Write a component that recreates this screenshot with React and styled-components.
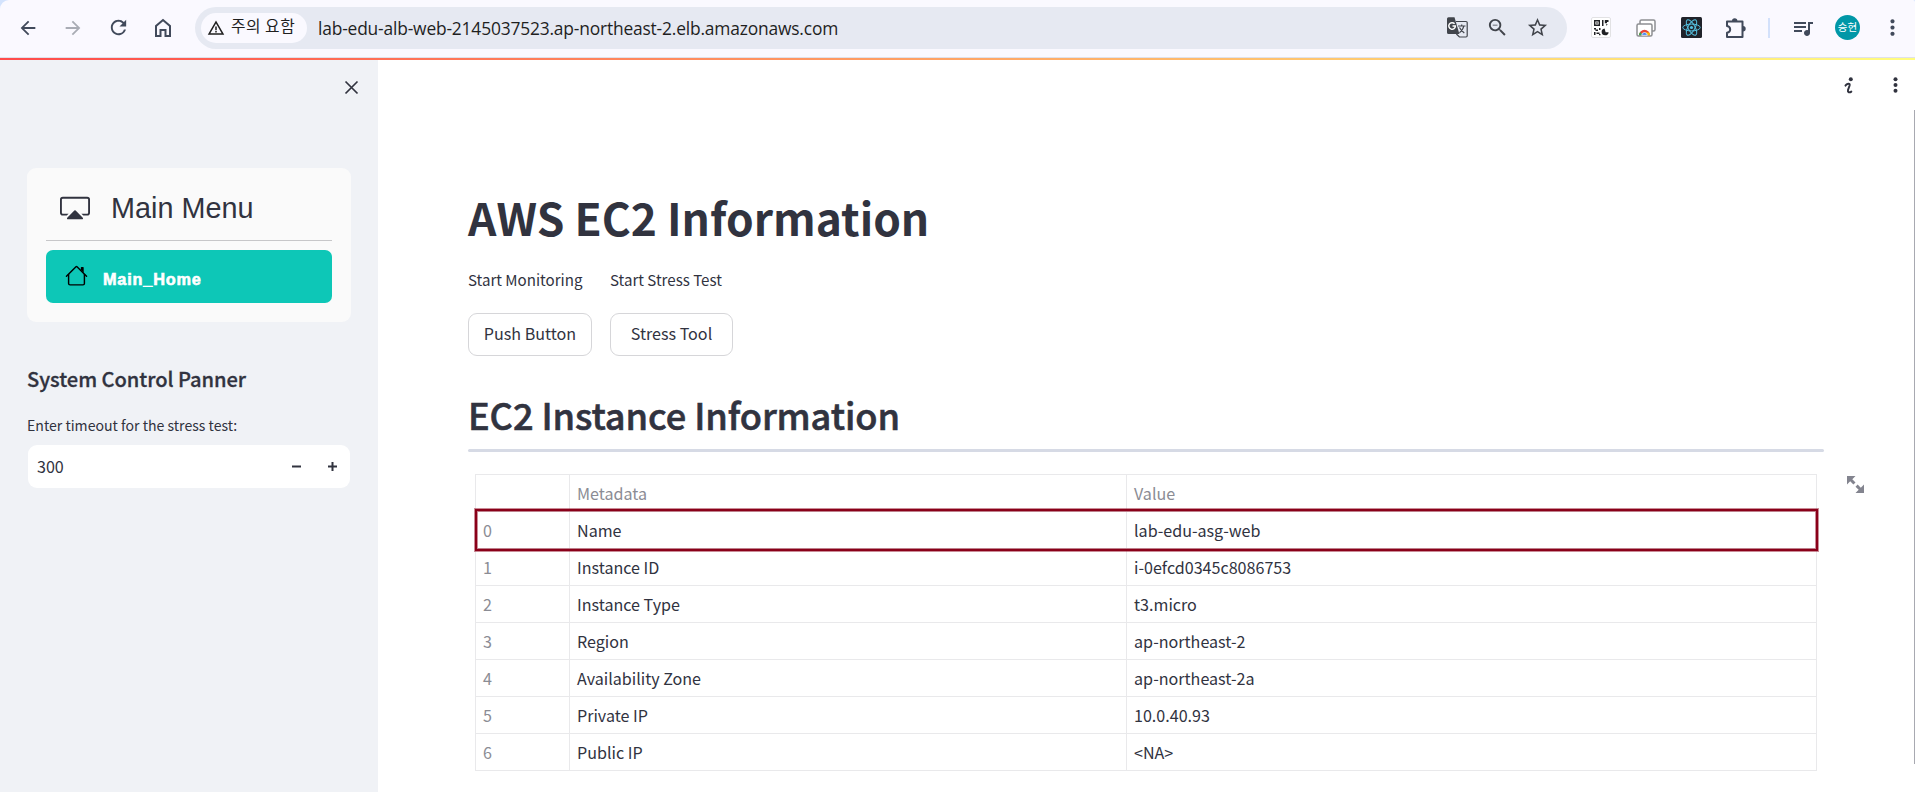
import React from "react";
import styled, { createGlobalStyle } from "styled-components";
import {
  MdArrowBack, MdArrowForward, MdRefresh, MdWarningAmber,
  MdZoomOut, MdStarBorder, MdQueueMusic, MdMoreVert,
} from "react-icons/md";

const sans = `"Noto Sans CJK KR", "Noto Sans", sans-serif`;

const GlobalStyle = createGlobalStyle`
  * { box-sizing: border-box; }
  body { margin: 0; background: #fff; overflow: hidden; font-family: ${sans}; color: #31333f; }
  svg { display: block; flex: none; }
`;

const Window = styled.div`
  height: 792px;
  display: flex;
  flex-direction: column;
  background: #fff;
`;

const TopStrip = styled.div`background: #d3e3fd;`;

const Toolbar = styled.header`
  height: 58px;
  display: flex;
  align-items: center;
  padding: 0 8px 2px 16px;
  background: #faf9ff;
  border-bottom: 1px solid #dfe1ea;
  border-radius: 9px 2px 0 0;
  color: #414a5b;
`;

const NavButton = styled.span`
  width: 24px;
  height: 24px;
  flex: none;
  margin-right: ${(p) => p.$gap ?? 21}px;
  display: grid;
  place-items: center;
  color: ${(p) => (p.$muted ? "#a9acb5" : "#414a5b")};
`;

const AddressBar = styled.div`
  width: 1372px;
  height: 42px;
  flex: none;
  padding: 0 18px 0 6px;
  display: flex;
  align-items: center;
  border-radius: 21px;
  background: #e6e9f2;
  color: #41444b;
`;

const SecurityChip = styled.div`
  width: 106px;
  height: 30px;
  padding-left: 6px;
  display: flex;
  align-items: center;
  gap: 6px;
  border-radius: 15px;
  background: #faf9ff;
  color: #1f1f1f;
  font-size: 15.8px;
  letter-spacing: 0.5px;
  line-height: 28px;
  white-space: nowrap;
`;

const ChipText = styled.span`padding-bottom: 3px;`;

const Url = styled.span`
  flex: 1;
  margin-left: 11px;
  padding-top: 1px;
  font: 17.4px/30px "Open Sans", sans-serif;
  letter-spacing: -0.18px;
  color: #1f1f1f;
`;

const AddressActions = styled.div`
  display: flex;
  align-items: center;
  gap: 17.5px;
`;

const Extensions = styled.div`
  flex: 1;
  margin-left: 22px;
  display: flex;
  align-items: center;
`;

const ExtensionSlot = styled.span`
  width: 24px;
  flex: none;
  margin-right: ${(p) => p.$gap ?? 21}px;
  display: grid;
  place-items: center;
`;

const ToolbarDivider = styled.i`
  width: 2px;
  height: 20px;
  flex: none;
  margin-right: 21px;
  background: #d3e1fb;
`;

const Avatar = styled.span`
  width: 25px;
  height: 25px;
  flex: none;
  margin-right: 20px;
  border-radius: 50%;
  background: #0097a7;
  color: #fff;
  font-size: 10.5px;
  line-height: 24px;
  text-align: center;
  white-space: nowrap;
`;

const Decoration = styled.div`
  height: 2px;
  flex: none;
  background: linear-gradient(90deg, #ff4b4b, #fffd80);
`;

const Page = styled.div`
  flex: 1;
  display: flex;
  min-height: 0;
`;

const Sidebar = styled.aside`
  width: 378px;
  padding: 0 27px;
  background: #f0f2f6;
`;

const CloseRow = styled.div`
  height: 108px;
  margin-right: -8px;
  padding-top: 20px;
  display: flex;
  justify-content: flex-end;
`;

const MenuCard = styled.nav`
  height: 154px;
  padding: 0 19px;
  border-radius: 9px;
  background: #fafafa;
`;

const MenuTitle = styled.div`
  height: 73px;
  padding: 7px 0 0 14px;
  display: flex;
  align-items: center;
  gap: 21px;
  border-bottom: 1px solid #c7c7c9;
  font: 28.8px/36px "Liberation Sans", sans-serif;
`;

const MenuItem = styled.div`
  height: 53px;
  margin-top: 9px;
  padding: 0 0 0 19px;
  display: flex;
  align-items: center;
  gap: 15px;
  border-radius: 7px;
  background: #0dc7b7;
  color: #fff;
  font: 900 16.3px/24px "Liberation Sans", sans-serif;
  letter-spacing: 0.8px;
  -webkit-text-stroke: 0.6px #fff;

  svg { margin-bottom: 2px; }
`;

const MenuItemText = styled.span`padding-top: 5px;`;

const SidebarHeading = styled.h3`
  margin: 43px 0 0;
  font-size: 20.1px;
  font-weight: 500;
  line-height: 28px;
  letter-spacing: -0.04px;
  -webkit-text-stroke: 0.3px #31333f;
`;

const FieldLabel = styled.label`
  display: block;
  margin: 20px 0 8px;
  font-size: 14.1px;
  line-height: 24px;
`;

const NumberField = styled.div`
  height: 43px;
  margin: 0 1px;
  padding: 0 13px 1px 9px;
  display: flex;
  align-items: center;
  border-radius: 9px;
  background: #fff;
  font-size: 16.1px;
`;

const FieldValue = styled.span`flex: 1;`;

const Stepper = styled.span`
  display: flex;
  gap: 27px;
`;

const Main = styled.main`
  flex: 1;
  display: flex;
  flex-direction: column;
  padding-left: 90px;
`;

const PageActions = styled.div`
  height: 50px;
  display: flex;
  align-items: center;
  justify-content: flex-end;
  gap: 39px;
  padding: 0 17px 0 0;
`;

const ScrollArea = styled.div`
  height: 654px;
  padding-right: 90px;
  border-right: 1px solid #a8a9b1;
`;

const Title = styled.h1`
  margin: 0;
  padding-top: 77px;
  font-size: 44.3px;
  font-weight: 700;
  line-height: 60px;
`;

const Controls = styled.div`
  display: flex;
  gap: 18px;
  margin-top: 21px;
`;

const Control = styled.div`
  width: ${(p) => p.$width}px;
  font-size: 15.1px;
  line-height: 23px;
  white-space: nowrap;
`;

const PushButton = styled.button`
  display: block;
  width: 100%;
  height: 43px;
  margin-top: 22px;
  padding: 0 0 3px;
  border: 1px solid #d6d6d9;
  border-radius: 9px;
  background: #fff;
  color: #31333f;
  font: 16.1px/38px ${sans};
`;

const SectionTitle = styled.h2`
  margin: 33px 0 0;
  font-size: 36.2px;
  font-weight: 500;
  line-height: 50px;
  letter-spacing: -0.1px;
  -webkit-text-stroke: 0.6px #31333f;
`;

const Rule = styled.div`
  height: 3px;
  margin-top: 10px;
  border-radius: 2px;
  background: #d6dae5;
`;

const TableArea = styled.div`
  display: flex;
  align-items: flex-start;
  gap: 30px;
  margin: 22px -45px 0 7px;
`;

const Table = styled.div`
  width: 1342px;
  flex: none;
  position: relative;
  border: solid #e9e9eb;
  border-width: 1px 0 0 1px;
`;

const Row = styled.div`
  display: grid;
  grid-template-columns: 94px 557px 690px;
  height: 37px;
`;

const Cell = styled.div`
  padding: 0 0 0 7px;
  border: solid #e9e9eb;
  border-width: 0 1px 1px 0;
  font-size: 16.1px;
  line-height: 36px;
  color: ${(p) => (p.$muted ? "#8b8c94" : "#31333f")};
`;

const RowMarker = styled.div`
  position: absolute;
  left: -1px;
  top: 34px;
  width: 1343px;
  height: 42px;
  border: 2px solid #8a0019;
  box-shadow: 0 0 0 1px rgba(138, 0, 25, 0.45), inset 0 0 0 1px rgba(138, 0, 25, 0.45);
`;

const ExpandSlot = styled.span`padding-top: 2px;`;

const HomeIcon = () => (
  <svg width="24" height="24" viewBox="0 0 24 24" fill="none" stroke="currentColor" strokeWidth="2">
    <path d="M5 20V10l7-6 7 6v10h-4.5v-6h-5v6Z" />
  </svg>
);

const TranslateIcon = () => (
  <svg width="21" height="21" viewBox="0 0 21 21">
    <path d="M9 4.5h10a1.2 1.2 0 0 1 1.2 1.2v13.1a1.2 1.2 0 0 1-1.2 1.2h-6.6l-3-3" fill="none" stroke="#41444b" strokeWidth="1.2" />
    <path d="M1.5.3h6L12.4 17H1.5A1.5 1.5 0 0 1 0 15.5V1.8A1.5 1.5 0 0 1 1.5.3Z" fill="#41444b" />
    <path d="M7.6 6.8A3.3 3.3 0 1 0 8.4 9H5.5" fill="none" stroke="#fff" strokeWidth="1.5" />
    <path d="M11 9h7.5M14.7 7.5V9M16.8 9c-.6 3-2.2 5.3-4.4 6.8M12.5 10.5c1.2 2.2 2.7 4 4.8 5.5" fill="none" stroke="#41444b" strokeWidth="1.2" />
  </svg>
);

const QrIcon = () => (
  <svg width="20" height="21" viewBox="0 0 20 21">
    <rect x=".5" y=".5" width="19" height="20" rx="1.5" fill="#fff" stroke="#e2e2e4" />
    <g fill="#202124">
      <path fillRule="evenodd" d="M3 3h6v6H3zM4.4 4.4v3.2h3.2V4.4z" />
      <path d="M5.300 5.300h1.400v1.400H5.300zM11 3h1.500v6H11zM13.800 3h3.700v2H16v1.300h-2.200zM15.300 7h1.400l-1.400 2zM3 11h2v1.400h2V14H4.500v-1.400H3zM8 11h1.500v2H8zM3 15h1.500v3H3zM5.500 15.500h3V17h-3zM8 17h1.500v1.300H8z" />
      <path d="M13.6 11.4a3.5 3.5 0 1 0 4 3.8h-3Z" />
    </g>
  </svg>
);

const CapturesIcon = () => (
  <svg width="20" height="18" viewBox="0 0 20 18">
    <rect x="4" y="1" width="15" height="11" rx="1.5" fill="#fff" stroke="#8d8f93" strokeWidth="1.5" />
    <rect x="1" y="5" width="15" height="12" rx="1.5" fill="#fff" stroke="#8d8f93" strokeWidth="1.5" />
    <path d="M3 16.3a5.5 5.5 0 0 1 11 0H3Z" fill="#ea4335" />
    <path d="M3 16.3c0-1.5.5-2.4 1.2-3.3l2.7 3.3Z" fill="#34a853" />
    <path d="M14 16.3c0-1.2-.3-2-.7-2.7H8.5v2.7Z" fill="#fbbc04" />
    <path d="M5.7 16.3a2.8 2.8 0 0 1 5.6 0Z" fill="#4285f4" stroke="#fff" strokeWidth=".7" />
  </svg>
);

const ReactIcon = () => (
  <svg width="21" height="21" viewBox="0 0 21 21">
    <rect width="21" height="21" rx="1.5" fill="#20232a" />
    <g fill="none" stroke="#55c1e0" strokeWidth="1" transform="translate(10.5 10.5)">
      <ellipse rx="8.7" ry="3.4" />
      <ellipse rx="8.7" ry="3.4" transform="rotate(60)" />
      <ellipse rx="8.7" ry="3.4" transform="rotate(120)" />
      <circle r="1.6" fill="#55c1e0" stroke="none" />
    </g>
  </svg>
);

const PuzzleIcon = () => (
  <svg width="22" height="22" viewBox="0 0 22 22">
    <path d="M2 4.5h15.5V20H2v-4.3c2-.3 3.2-1.5 3.2-3.2S4 9.3 2 9Z" fill="none" stroke="#414a5b" strokeWidth="2" strokeLinejoin="round" />
    <path d="M7 4a2.7 2.7 0 0 1 5.4 0ZM18 9a2.7 2.7 0 0 1 0 5.4Z" fill="#414a5b" />
  </svg>
);

const CloseIcon = () => (
  <svg width="15" height="15" viewBox="0 0 15 15" stroke="#31333f" strokeWidth="1.7">
    <path d="M1.5 1.5l12 12M13.5 1.5l-12 12" />
  </svg>
);

const CastIcon = () => (
  <svg width="30" height="30" viewBox="0 0 16 16" fill="#31333f">
    <path d="m7.646 9.354-3.792 3.792a.5.5 0 0 0 .353.854h7.586a.5.5 0 0 0 .354-.854L8.354 9.354a.5.5 0 0 0-.708 0z" />
    <path d="M11.414 11H14.5a.5.5 0 0 0 .5-.5v-7a.5.5 0 0 0-.5-.5h-13a.5.5 0 0 0-.5.5v7a.5.5 0 0 0 .5.5h3.086l-1 1H1.5A1.5 1.5 0 0 1 0 10.5v-7A1.5 1.5 0 0 1 1.5 2h13A1.5 1.5 0 0 1 16 3.5v7a1.5 1.5 0 0 1-1.5 1.5h-2.086l-1-1z" />
  </svg>
);

const HouseIcon = () => (
  <svg width="23" height="23" viewBox="0 0 16 16" fill="#000">
    <path d="M2 13.5V7h1v6.5a.5.5 0 0 0 .5.5h9a.5.5 0 0 0 .5-.5V7h1v6.5a1.5 1.5 0 0 1-1.5 1.5h-9A1.5 1.5 0 0 1 2 13.5zm11-11V6l-2-2V2.5a.5.5 0 0 1 .5-.5h1a.5.5 0 0 1 .5.5z" />
    <path d="M7.293 1.5a1 1 0 0 1 1.414 0l6.647 6.646a.5.5 0 0 1-.708.708L8 2.207 1.354 8.854a.5.5 0 1 1-.708-.708L7.293 1.5z" />
  </svg>
);

const StepIcon = ({ plus }) => (
  <svg width="9" height="9" viewBox="0 0 9 9" fill="#31333f">
    <path d="M0 3.5h9v2H0z" />
    {plus && <path d="M3.5 0h2v9h-2z" />}
  </svg>
);

const InfoIcon = () => (
  <svg width="10" height="17" viewBox="0 0 10 17">
    <circle cx="6.8" cy="2.2" r="2" fill="#31333f" />
    <path d="M1.5 8.6C2.7 6.4 6.3 5.7 5.6 8.5L4 13c-.6 2.6 1.6 2.9 3.300 1.600" fill="none" stroke="#31333f" strokeWidth="2" strokeLinecap="round" />
  </svg>
);

const DotsIcon = () => (
  <svg width="5" height="16" viewBox="0 0 5 16" fill="#31333f">
    <circle cx="2.5" cy="2.3" r="2" /><circle cx="2.5" cy="8" r="2" /><circle cx="2.5" cy="13.7" r="2" />
  </svg>
);

const ExpandIcon = () => (
  <svg width="17" height="17" viewBox="0 0 8 8" fill="#83848f">
    <path d="M0 0v4l1.5-1.5 1.5 1.5 1-1-1.5-1.5 1.5-1.5h-4zm5 4l-1 1 1.5 1.5-1.5 1.5h4v-4l-1.5 1.5-1.5-1.5z" />
  </svg>
);

const metadata = [
  ["Name", "lab-edu-asg-web"],
  ["Instance ID", "i-0efcd0345c8086753"],
  ["Instance Type", "t3.micro"],
  ["Region", "ap-northeast-2"],
  ["Availability Zone", "ap-northeast-2a"],
  ["Private IP", "10.0.40.93"],
  ["Public IP", "<NA>"],
];

export default function App() {
  return (
    <Window>
      <GlobalStyle />
      <TopStrip>
        <Toolbar>
          <NavButton><MdArrowBack size={22} /></NavButton>
          <NavButton $muted><MdArrowForward size={22} /></NavButton>
          <NavButton><MdRefresh size={23} /></NavButton>
          <NavButton $gap={20}><HomeIcon /></NavButton>
          <AddressBar>
            <SecurityChip>
              <MdWarningAmber size={18} />
              <ChipText>주의 요함</ChipText>
            </SecurityChip>
            <Url>lab-edu-alb-web-2145037523.ap-northeast-2.elb.amazonaws.com</Url>
            <AddressActions>
              <TranslateIcon />
              <MdZoomOut size={23} />
              <MdStarBorder size={23} />
            </AddressActions>
          </AddressBar>
          <Extensions>
            <ExtensionSlot><QrIcon /></ExtensionSlot>
            <ExtensionSlot><CapturesIcon /></ExtensionSlot>
            <ExtensionSlot><ReactIcon /></ExtensionSlot>
            <ExtensionSlot $gap={20}><PuzzleIcon /></ExtensionSlot>
            <ToolbarDivider />
            <ExtensionSlot $gap={20}><MdQueueMusic size={24} /></ExtensionSlot>
            <Avatar>승현</Avatar>
            <MdMoreVert size={25} />
          </Extensions>
        </Toolbar>
      </TopStrip>
      <Decoration />
      <Page>
        <Sidebar>
          <CloseRow><CloseIcon /></CloseRow>
          <MenuCard>
            <MenuTitle><CastIcon />Main Menu</MenuTitle>
            <MenuItem><HouseIcon /><MenuItemText>Main_Home</MenuItemText></MenuItem>
          </MenuCard>
          <SidebarHeading>System Control Panner</SidebarHeading>
          <FieldLabel>Enter timeout for the stress test:</FieldLabel>
          <NumberField>
            <FieldValue>300</FieldValue>
            <Stepper><StepIcon /><StepIcon plus /></Stepper>
          </NumberField>
        </Sidebar>
        <Main>
          <PageActions><InfoIcon /><DotsIcon /></PageActions>
          <ScrollArea>
            <Title>AWS EC2 Information</Title>
            <Controls>
              <Control $width={124}>Start Monitoring<PushButton>Push Button</PushButton></Control>
              <Control $width={123}>Start Stress Test<PushButton>Stress Tool</PushButton></Control>
            </Controls>
            <SectionTitle>EC2 Instance Information</SectionTitle>
            <Rule />
            <TableArea>
              <Table>
                <Row><Cell /><Cell $muted>Metadata</Cell><Cell $muted>Value</Cell></Row>
                {metadata.map(([key, value], i) => (
                  <Row key={key}><Cell $muted>{i}</Cell><Cell>{key}</Cell><Cell>{value}</Cell></Row>
                ))}
                <RowMarker />
              </Table>
              <ExpandSlot><ExpandIcon /></ExpandSlot>
            </TableArea>
          </ScrollArea>
        </Main>
      </Page>
    </Window>
  );
}
